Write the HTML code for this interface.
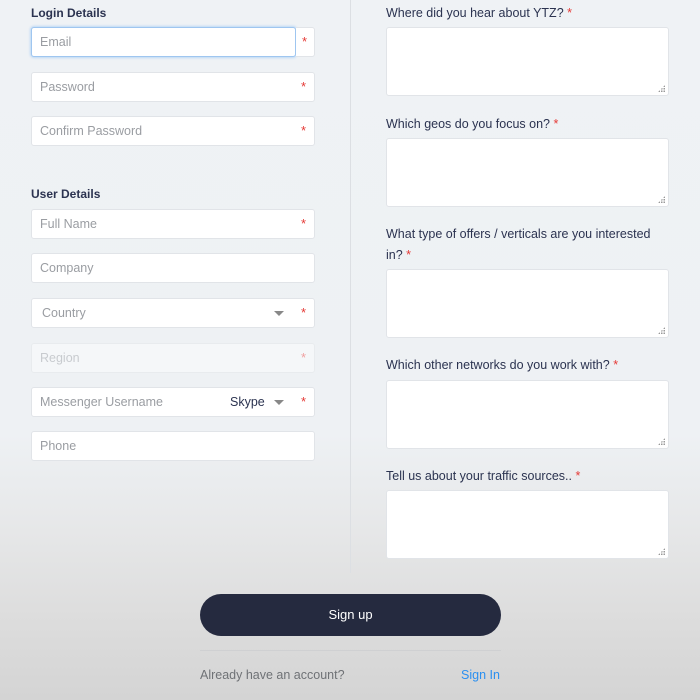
<!DOCTYPE html><html><head><style>
*{box-sizing:border-box;margin:0;padding:0}
body{width:700px;height:700px;overflow:hidden;font-family:"Liberation Sans",Arial,sans-serif;position:relative;
background:linear-gradient(180deg,#eff2f5 0%,#eef1f4 62%,#e6e7e8 76%,#dddddd 88%,#d4d4d4 100%);}
.a{position:absolute}
.lbl{font-size:12px;font-weight:bold;color:#2b3350}
.in{position:absolute;left:31px;width:284px;height:30px;background:#fff;border:1px solid #e1e4e8;border-radius:3px;font-size:12.5px;color:#9a9da2;padding:7px 8px;line-height:14px}
.st{position:absolute;right:8px;top:7px;color:#e53935;font-size:13px}
.tri{position:absolute;right:30px;top:12px;border-left:5px solid transparent;border-right:5px solid transparent;border-top:5px solid #888}
.q{position:absolute;left:386px;font-size:12.5px;color:#2b3350;line-height:21px;width:270px}
.q b{color:#e53935;font-weight:normal}
.ta{position:absolute;left:386px;width:283px;height:69px;background:#fff;border:1px solid #e1e4e8;border-radius:3px}
.ta:after{content:"";position:absolute;right:3px;bottom:3px;width:7px;height:7px;background:radial-gradient(circle,#999 0.8px,transparent 1px) 0 0/2.5px 2.5px;clip-path:polygon(100% 0,100% 100%,0 100%)}
</style></head><body>
<div class="a lbl" style="left:31px;top:6px">Login Details</div>
<div class="in" style="top:27px;width:265px;border:1px solid #9fc6f0;box-shadow:0 0 2px 1px #bcd8f5">Email</div>
<div class="in" style="top:27px;left:296px;width:19px;border-left:none;border-radius:0 3px 3px 0"><span class="st" style="right:7px">*</span></div>
<div class="in" style="top:72px">Password<span class="st">*</span></div>
<div class="in" style="top:116px">Confirm Password<span class="st">*</span></div>
<div class="a lbl" style="left:31px;top:187px">User Details</div>
<div class="in" style="top:209px">Full Name<span class="st">*</span></div>
<div class="in" style="top:253px">Company</div>
<div class="in" style="top:298px;padding-left:10px">Country<span class="tri"></span><span class="st">*</span></div>
<div class="in" style="top:343px;background:#f5f7f9;color:#c8cbcf;border-color:#e8ebee">Region<span class="st" style="color:#f0a0a0">*</span></div>
<div class="in" style="top:387px">Messenger Username<span class="a" style="left:198px;top:7px;color:#2b3350">Skype</span><span class="tri"></span><span class="st">*</span></div>
<div class="in" style="top:431px">Phone</div>
<div class="a" style="left:350px;top:0;width:1px;height:573px;background:#dcdfe3"></div>
<div class="q" style="top:3px">Where did you hear about YTZ? <b>*</b></div>
<div class="ta" style="top:27px"></div>
<div class="q" style="top:114px">Which geos do you focus on? <b>*</b></div>
<div class="ta" style="top:138px"></div>
<div class="q" style="top:224px">What type of offers / verticals are you interested<br>in? <b>*</b></div>
<div class="ta" style="top:269px"></div>
<div class="q" style="top:355px">Which other networks do you work with? <b>*</b></div>
<div class="ta" style="top:380px"></div>
<div class="q" style="top:466px">Tell us about your traffic sources.. <b>*</b></div>
<div class="ta" style="top:490px"></div>
<div class="a" style="left:200px;top:594px;width:301px;height:42px;background:#252a3f;border-radius:21px;color:#fff;font-size:13px;text-align:center;line-height:42px">Sign up</div>
<div class="a" style="left:200px;top:650px;width:301px;height:1px;background:#cfd0d2"></div>
<div class="a" style="left:200px;top:668px;font-size:12.5px;color:#6f7276">Already have an account?</div>
<div class="a" style="left:461px;top:668px;font-size:12.5px;color:#2a8ff0">Sign In</div>
</body></html>
